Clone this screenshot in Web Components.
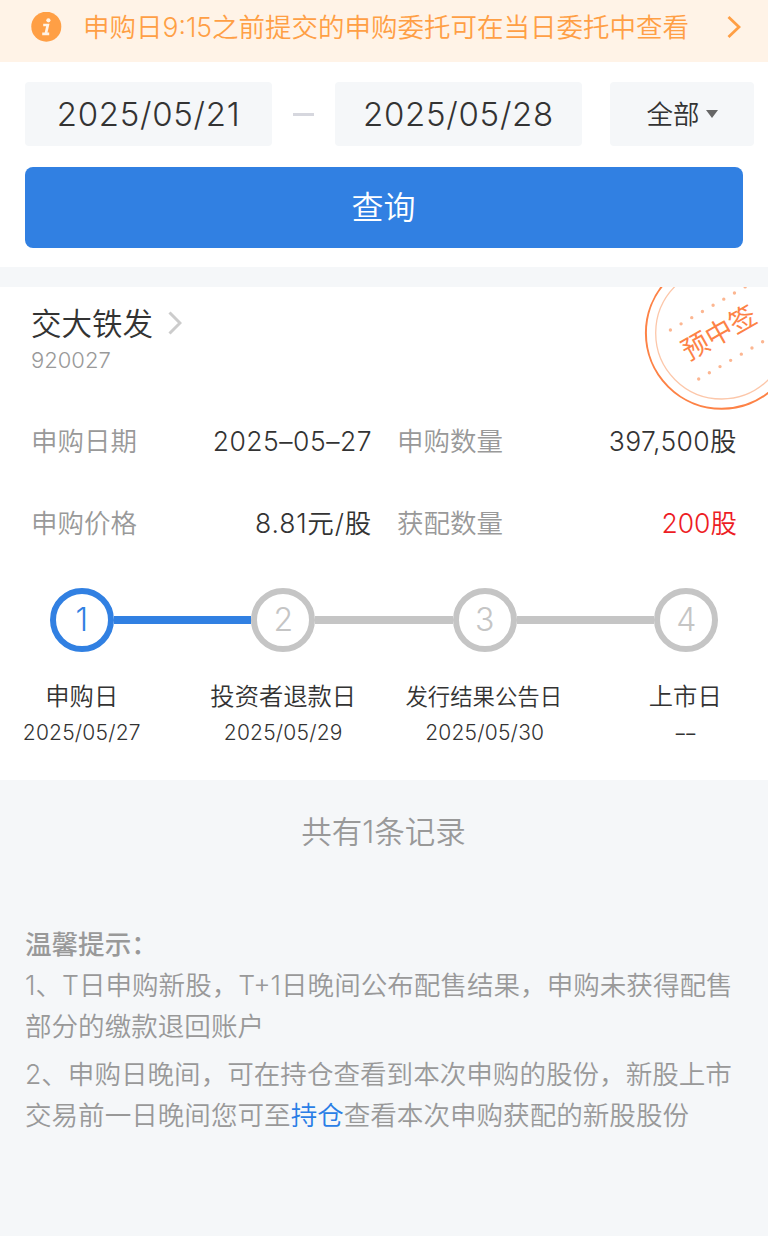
<!DOCTYPE html>
<html lang="zh-CN">
<head>
<meta charset="UTF-8">
<title>新股申购查询</title>
<style>
    body {
        margin: 0;
        background: #fff;
        color: #333;
        font-family: "Inter", "Noto Sans CJK SC", sans-serif;
        font-weight: 350;
        font-size: 26.5px;
    }
</style>
</head>
<body>
<subscription-page>
    <notice-bar>申购日9:15之前提交的申购委托可在当日委托中查看</notice-bar>
    <query-form from="2025/05/21" to="2025/05/28" type="全部">查询</query-form>
    <stock-record name="交大铁发" code="920027">
        <info-field label="申购日期" style="--ls:.5px">2025–05–27</info-field>
        <info-field label="申购数量" style="--ls:.4px">397,500股</info-field>
        <info-field label="申购价格" style="--ls:.8px">8.81元/股</info-field>
        <info-field label="获配数量" style="--value-color:#ed1c24">200股</info-field>
        <step-node slot="steps" number="1" date="2025/05/27" class="first active">申购日</step-node>
        <step-node slot="steps" number="2" date="2025/05/29" class="reached">投资者退款日</step-node>
        <step-node slot="steps" number="3" date="2025/05/30" class="long">发行结果公告日</step-node>
        <step-node slot="steps" number="4" date="––" class="last">上市日</step-node>
    </stock-record>
    <record-count>共有1条记录</record-count>
    <tips-panel>
        <tip-text>1、T日申购新股，T+1日晚间公布配售结果，申购未获得配售<br>部分的缴款退回账户</tip-text>
        <tip-text>2、申购日晚间，可在持仓查看到本次申购的股份，新股上市<br>交易前一日晚间您可至<tip-link>持仓</tip-link>查看本次申购获配的新股股份</tip-text>
    </tips-panel>
</subscription-page>

<script>
// Every component has an open shadow root filled from its template()
class BaseElement extends HTMLElement {
    constructor() {
        super();
        this.attachShadow({mode: 'open'});
    }
    connectedCallback() {
        this.shadowRoot.innerHTML = this.template();
    }
    attr(name) {
        return this.getAttribute(name) || '';
    }
}

class SubscriptionPage extends BaseElement {
    template() {
        return `<style>
            :host {
                display: flex;
                flex-direction: column;
                width: 768px;
                height: 1235.5px;
                background: #f5f7f9;
                overflow: hidden;
            }
        </style>
        <slot></slot>`;
    }
}
customElements.define('subscription-page', SubscriptionPage);

class NoticeBar extends BaseElement {
    template() {
        return `<style>
            :host {
                display: flex;
                align-items: center;
                box-sizing: border-box;
                height: 62px;
                padding: 0 27px 8px 31px;
                background: #fff3e7;
                color: #ff9f45;
                white-space: nowrap;
            }
            .text { margin-left: 21px; flex: 1; line-height: 40px; }
            svg { display: block; }
        </style>
        <svg width="31" height="31" viewBox="0 0 31 31">
            <circle cx="15.3" cy="14.7" r="15" fill="#ff9f45"/>
            <circle cx="17.4" cy="8.3" r="2.1" fill="#fff3e7"/>
            <path d="M12.2 13h4.6l-2 8.8M11.2 21.8h7" fill="none" stroke="#fff3e7" stroke-width="2.7"/>
        </svg>
        <span class="text"><slot></slot></span>
        <svg width="14" height="24" viewBox="0 0 14 24">
            <path d="M1.5 2L12 12 1.5 22" fill="none" stroke="#ff9f45" stroke-width="2.8"/>
        </svg>`;
    }
}
customElements.define('notice-bar', NoticeBar);

class QueryForm extends BaseElement {
    template() {
        return `<style>
            :host {
                display: block;
                box-sizing: border-box;
                height: 205px;
                padding: 20px 14px 0 25px;
                background: #fff;
            }
            .row { display: flex; align-items: center; height: 64px; }
            .box {
                display: flex;
                align-items: center;
                justify-content: center;
                width: 247px;
                height: 64px;
                border-radius: 4px;
                background: #f5f7f9;
            }
            .date { font-size: 33px; letter-spacing: .7px; }
            .dash { width: 21px; height: 3px; margin: 0 21px; background: #d6d7de; }
            .type { width: 144px; margin-left: auto; gap: 6px; }
            .label { padding-bottom: 3px; }
            .arrow {
                border: 6.5px solid transparent;
                border-top: 8px solid #666;
                border-bottom: 0;
            }
            button {
                display: block;
                width: 718px;
                height: 81px;
                margin-top: 21px;
                padding: 0 1px 6px 0;
                border: 0;
                border-radius: 8px;
                background: #3180e2;
                color: #fff;
                font: inherit;
                font-size: 32px;
            }
        </style>
        <div class="row">
            <div class="box date">${this.attr('from')}</div>
            <div class="dash"></div>
            <div class="box date">${this.attr('to')}</div>
            <div class="box type"><span class="label">${this.attr('type')}</span><span class="arrow"></span></div>
        </div>
        <button><slot></slot></button>`;
    }
}
customElements.define('query-form', QueryForm);

class StockRecord extends BaseElement {
    template() {
        return `<style>
            :host {
                display: block;
                position: relative;
                box-sizing: border-box;
                height: 493px;
                margin-top: 20px;
                padding-top: 16px;
                background: #fff;
                overflow: hidden;
            }
            .name {
                display: flex;
                align-items: center;
                gap: 15px;
                height: 40px;
                padding-left: 31px;
                font-size: 30.5px;
            }
            .name span { padding-bottom: 3px; }
            .code {
                padding-left: 31px;
                font-size: 22px;
                line-height: 34px;
                color: #999;
            }
            .fields {
                display: grid;
                grid-template-columns: 341px 340px;
                column-gap: 25px;
                margin: 24px 0 0 31px;
            }
            .steps { display: flex; margin: 24px -19px 0; }
            ::slotted(step-node) { flex: 1; }
            .stamp { position: absolute; left: 640px; top: 0; color: #fd8246; }
        </style>
        <div class="name">
            <span>${this.attr('name')}</span>
            <svg width="14" height="24" viewBox="0 0 14 24">
                <path d="M1.5 1.5L12 12 1.5 22.5" fill="none" stroke="#ccc" stroke-width="3"/>
            </svg>
        </div>
        <div class="code">${this.attr('code')}</div>
        <div class="fields"><slot></slot></div>
        <div class="steps"><slot name="steps"></slot></div>
        <svg class="stamp" width="128" height="126" viewBox="640 287 128 126">
            <circle cx="721.7" cy="333" r="75.8" fill="none" stroke="currentColor" stroke-width="2"/>
            <circle cx="721.7" cy="333" r="66" fill="none" stroke="#fcc7aa" stroke-width="1.3"/>
            <path d="M670.4 330L768 273.6M698.7 379L768 338.6" fill="none" stroke="#fcb691"
                stroke-width="3.4" stroke-linecap="round" stroke-dasharray="0 12.33"/>
            <text transform="translate(718.8 332.5) rotate(-29.5)" y="10" text-anchor="middle"
                font-size="27" font-weight="400" fill="currentColor">预中签</text>
        </svg>`;
    }
}
customElements.define('stock-record', StockRecord);

class InfoField extends BaseElement {
    template() {
        return `<style>
            :host {
                display: flex;
                justify-content: space-between;
                line-height: 81.5px;
                height: 81.5px;
                white-space: nowrap;
            }
            .label { color: #999; }
            .value { color: var(--value-color, #333); letter-spacing: var(--ls, 0); }
        </style>
        <span class="label">${this.attr('label')}</span>
        <span class="value"><slot></slot></span>`;
    }
}
customElements.define('info-field', InfoField);

class StepNode extends BaseElement {
    template() {
        return `<style>
            :host {
                --ring: #c5c5c5;
                --before: #c5c5c5;
                --after: #c5c5c5;
                display: block;
                text-align: center;
                white-space: nowrap;
            }
            :host(.first) { --before: transparent; }
            :host(.active) { --ring: #3180e2; --after: #3180e2; }
            :host(.reached) { --before: #3180e2; }
            :host(.last) { --after: transparent; }
            .track { display: flex; align-items: center; }
            .line { flex: 1; height: 8px; margin-top: -1px; }
            .circle {
                box-sizing: border-box;
                width: 64px;
                height: 64px;
                border: 6px solid var(--ring);
                border-radius: 50%;
                color: var(--ring);
                font-size: 32px;
                line-height: 52px;
            }
            .title { margin-top: 25px; font-size: 24.3px; line-height: 38px; }
            :host(.long) .title { padding: 2px 2px 0 0; font-size: 22.4px; line-height: 36px; }
            .date { font-size: 21px; line-height: 36px; letter-spacing: .2px; }
            :host(.last) .title { padding-right: 2px; }
            :host(.last) .date { letter-spacing: 1.5px; font-size: 18px; padding-top: 1px; font-weight: 400; }
        </style>
        <div class="track">
            <div class="line" style="background:var(--before)"></div>
            <div class="circle">${this.attr('number')}</div>
            <div class="line" style="background:var(--after)"></div>
        </div>
        <div class="title"><slot></slot></div>
        <div class="date">${this.attr('date')}</div>`;
    }
}
customElements.define('step-node', StepNode);

class RecordCount extends BaseElement {
    template() {
        return `<style>
            :host {
                display: block;
                padding: 32px 1px 0 0;
                font-size: 30.5px;
                line-height: 40px;
                text-align: center;
                color: #999;
            }
        </style>
        <slot></slot>`;
    }
}
customElements.define('record-count', RecordCount);

class TipsPanel extends BaseElement {
    template() {
        return `<style>
            :host {
                display: flex;
                flex-direction: column;
                padding: 72px 0 0 25px;
                font-size: 26.57px;
                line-height: 41px;
                color: #999;
            }
            .title { font-weight: 500; }
        </style>
        <div class="title">温馨提示：</div>
        <slot></slot>`;
    }
}
customElements.define('tips-panel', TipsPanel);

class TipText extends BaseElement {
    template() {
        return `<style>
            :host { display: block; margin-bottom: 7px; white-space: nowrap; }
        </style>
        <slot></slot>`;
    }
}
customElements.define('tip-text', TipText);

// Inline element, so no whitespace is left around the slot
class TipLink extends BaseElement {
    template() {
        return `<style>:host { display: inline; color: #2a7ee6; }</style><slot></slot>`;
    }
}
customElements.define('tip-link', TipLink);
</script>
</body>
</html>
